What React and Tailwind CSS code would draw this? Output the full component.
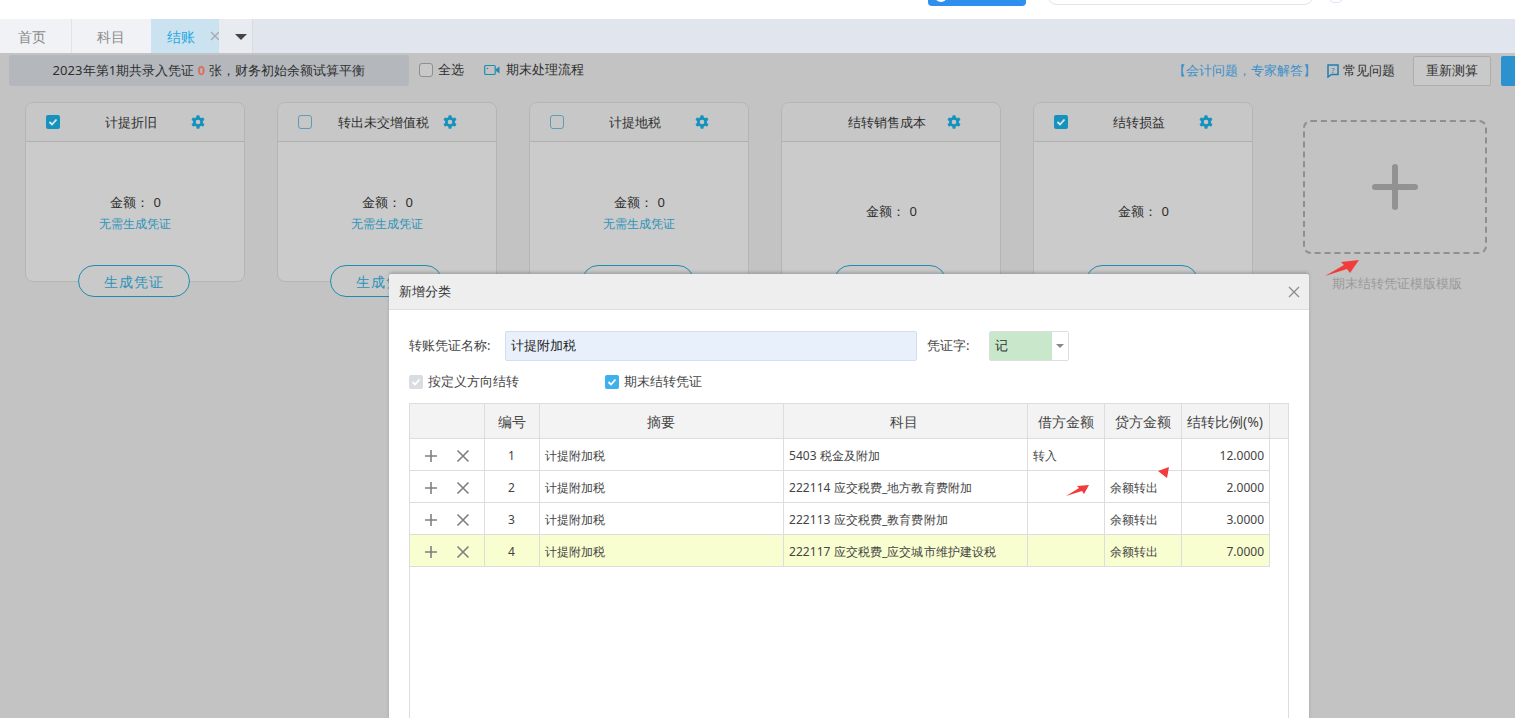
const SANS = "font-['Liberation_Sans','Noto_Sans_CJK_SC',sans-serif]";

function Gear() {
  return (
    <svg width="14" height="14" viewBox="0 0 14 14" className="shrink-0">
      <g fill="#1592bd">
        <circle cx="7" cy="7" r="5" />
        <rect x="5.4" y="0.3" width="3.2" height="13.4" rx="0.6" />
        <rect x="5.4" y="0.3" width="3.2" height="13.4" rx="0.6" transform="rotate(60 7 7)" />
        <rect x="5.4" y="0.3" width="3.2" height="13.4" rx="0.6" transform="rotate(120 7 7)" />
      </g>
      <circle cx="7" cy="7" r="2.3" fill="#c6c6c6" />
    </svg>
  );
}

function CardCheck({ state }) {
  if (state === "none") return <span className="w-[14px] h-[14px] shrink-0" />;
  if (state === "on")
    return (
      <span className="w-[14px] h-[14px] shrink-0 rounded-[2px] bg-[#1592bd] flex items-center justify-center">
        <svg width="10" height="10" viewBox="0 0 10 10"><path d="M1.5 5 L4 7.5 L8.5 2.5" stroke="#dfe9ee" strokeWidth="1.8" fill="none" /></svg>
      </span>
    );
  return <span className="w-[14px] h-[14px] shrink-0 rounded-[3px] border border-[#5b9db5]" />;
}

function Card({ title, check, hint }) {
  return (
    <div className="relative w-[220px] h-[180px] shrink-0">
      <div className="h-full rounded-[8px] border border-[#b5b5b5] bg-[#cbcbcb] flex flex-col">
        <div className="h-[39px] shrink-0 border-b border-[#b0b0b0] bg-[#c7c7c7] rounded-t-[8px] flex items-center pl-[20px]">
          <CardCheck state={check} />
          <span className="ml-[6px] w-[130px] pt-[1px] text-center text-[13px] text-[#2e2e2e]">{title}</span>
          <span className="ml-[-5px]"><Gear /></span>
        </div>
        <div className={`flex-1 flex flex-col items-center justify-center pb-[1px] text-[13px] text-[#2e2e2e] ${hint ? "pt-[6px]" : ""}`}>
          <span className="leading-[20px] tracking-[0.3px] pl-[1px]">金额： 0</span>
          {hint && <span className="leading-[24px] text-[12px] text-[#2b93ba]">无需生成凭证</span>}
        </div>
      </div>
      <div className="absolute left-[53px] top-[163px] w-[112px] h-[32px] rounded-full border border-[#1f8db0] bg-[#c9c9c9] flex items-center justify-center text-[14px] tracking-[1px] text-[#2b93ba]">
        生成凭证
      </div>
    </div>
  );
}

function Plus() {
  return (
    <svg width="14" height="14" viewBox="0 0 14 14"><path d="M7 1 V13 M1 7 H13" stroke="#7f7f7f" strokeWidth="1.6" /></svg>
  );
}
function Cross() {
  return (
    <svg width="14" height="14" viewBox="0 0 14 14"><path d="M1.5 1.5 L12.5 12.5 M12.5 1.5 L1.5 12.5" stroke="#7f7f7f" strokeWidth="1.6" /></svg>
  );
}

function RedArrow({ className, w, h, d }) {
  return (
    <svg className={className} width={w} height={h} viewBox={`0 0 ${w} ${h}`}><path d={d} fill="#f23c3c" /></svg>
  );
}

const COLS = "grid grid-cols-[75px_55px_244px_244px_77px_77px_88px_19px]";
const rows = [
  ["1", "5403 税金及附加", "转入", "", "12.0000"],
  ["2", "222114 应交税费_地方教育费附加", "", "余额转出", "2.0000"],
  ["3", "222113 应交税费_教育费附加", "", "余额转出", "3.0000"],
  ["4", "222117 应交税费_应交城市维护建设税", "", "余额转出", "7.0000"],
];
const heads = ["", "编号", "摘要", "科目", "借方金额", "贷方金额", "结转比例(%)", ""];

export default function App() {
  return (
    <div className={`${SANS} relative w-[1515px] h-[718px] overflow-hidden bg-[#c3c3c3]`}>
      {/* top white strip */}
      <div className="h-[19px] bg-white relative flex items-start">
        <div className="absolute left-[928px] top-[-4px] w-[98px] h-[10px] rounded-b-[4px] bg-[#2f8fee]">
          <span className="absolute left-[7px] top-[-6px] w-[12px] h-[12px] rounded-full bg-white" />
        </div>
        <div className="absolute left-[1047px] top-[-10px] w-[267px] h-[15px] rounded-b-[10px] border border-[#e3e3e3] bg-white" />
        <div className="absolute left-[1329px] top-[-8px] w-[14px] h-[11px] rounded-full border border-[#d8e4f2]" />
      </div>

      {/* tabs */}
      <div className="h-[34px] bg-[#e1e6ee] flex text-[14px]">
        <div className="w-[72px] bg-[#f0f2f5] border-r border-[#e1e4e9] text-[#8a8a8a] flex items-center pl-[18px]">首页</div>
        <div className="w-[79px] bg-[#f0f2f5] text-[#8a8a8a] flex items-center justify-center pr-[2px]">科目</div>
        <div className="w-[68px] bg-[#cbe2f0] text-[#29a9df] flex items-center pl-[16px] gap-[15px]">
          <span className="whitespace-nowrap shrink-0">结账</span>
          <svg className="shrink-0" width="10" height="10" viewBox="0 0 10 10"><path d="M1 1 L9 9 M9 1 L1 9" stroke="#a2abb2" strokeWidth="1.3" /></svg>
        </div>
        <div className="w-[34px] bg-[#e8ecf1] border-r border-[#d9dde3] flex items-center justify-center pl-[10px]">
          <span className="w-0 h-0 mt-[1px] border-x-[6px] border-x-transparent border-t-[6px] border-t-[#444]" />
        </div>
      </div>

      {/* toolbar */}
      <div className="h-[33px] flex items-center text-[13px] text-[#2e2e2e]">
        <div className="ml-[9px] w-[400px] h-[31px] mt-[2px] rounded-[3px] bg-[#b4b8bd] flex items-center justify-center">
          <span className="tracking-[0.05px]">2023年第1期共录入凭证 <b className="text-[#d9705f]">0</b> 张，财务初始余额试算平衡</span>
        </div>
        <span className="ml-[10px] w-[14px] h-[14px] rounded-[3px] border border-[#8f8f8f] bg-[#c9c9c9]" />
        <span className="ml-[5px]">全选</span>
        <svg className="ml-[20px]" width="16" height="12" viewBox="0 0 16 12">
          <rect x="0.7" y="1.5" width="10.5" height="9" rx="1" fill="none" stroke="#1f8db0" strokeWidth="1.2" />
          <path d="M12 5 L15.5 2.5 V9.5 L12 7 Z" fill="#1f8db0" />
          <circle cx="3.5" cy="4.5" r="0.8" fill="#1f8db0" />
        </svg>
        <span className="ml-[6px]">期末处理流程</span>
        <span className="ml-auto pt-[2px] text-[#3a8fc9]">【会计问题，专家解答】</span>
        <svg className="ml-[11px] mt-[2px]" width="12" height="14" viewBox="0 0 12 14">
          <path d="M1 1 H11 V10.5 H4.5 L1 13 Z" fill="none" stroke="#1f7fb0" strokeWidth="1.5" />
          <text x="6" y="8.5" fontSize="7.5" textAnchor="middle" fill="#1f7fb0">?</text>
        </svg>
        <span className="ml-[4px] pt-[2px]">常见问题</span>
        <div className="ml-[18px] mt-[2px] w-[78px] h-[30px] rounded-[2px] border border-[#adadad] bg-[#c9c9c9] flex items-center justify-center">重新测算</div>
        <div className="ml-[10px] mt-[2px] w-[14px] h-[30px] rounded-l-[2px] bg-[#2b92cf]" />
      </div>

      {/* cards */}
      <div className="flex gap-[32px] pl-[25px] pt-[16px] relative">
        <Card title="计提折旧" check="on" hint />
        <Card title="转出未交增值税" check="off" hint />
        <Card title="计提地税" check="off" hint />
        <Card title="结转销售成本" check="none" />
        <Card title="结转损益" check="on" />
        <div className="ml-[18px] mt-[18px] flex flex-col items-center">
          <div className="w-[184px] h-[134px] rounded-[8px] border-[2px] border-dashed border-[#8f8f8f] flex items-center justify-center">
            <svg width="46" height="46" viewBox="0 0 46 46"><path d="M23 3 V43 M3 23 H43" stroke="#929292" strokeWidth="6" strokeLinecap="round" /></svg>
          </div>
          <span className="mt-[20px] pl-[3px] text-[13px] text-[#9a9a9a]">期末结转凭证模版模版</span>
        </div>
      </div>

      <RedArrow className="absolute left-[1325px] top-[259px]" w={34} h={18} d="M0 17 L19 6 L16 3 L34 1 L25 14 L22 10 Z" />

      {/* modal */}
      <div className="absolute left-[389px] top-[274px] w-[920px] h-[460px] rounded-t-[3px] bg-white shadow-[0_-2px_3px_rgba(90,100,110,0.35)] text-[#333]">
        <div className="h-[36px] bg-[#eeeeee] border-b border-[#dfdfdf] rounded-t-[3px] flex items-center pl-[10px] pr-[9px] justify-between text-[13px]">
          <span>新增分类</span>
          <svg width="12" height="12" viewBox="0 0 12 12"><path d="M1 1 L11 11 M11 1 L1 11" stroke="#8c8c8c" strokeWidth="1.3" /></svg>
        </div>
        <div className="pl-[20px] pr-[20px]">
          <div className="mt-[21px] flex items-center text-[13px]">
            <span className="w-[96px] text-[#444]">转账凭证名称:</span>
            <div className="w-[412px] h-[30px] rounded-[2px] border border-[#d3dfee] bg-[#e8f0fc] flex items-center pl-[5px] text-[13px] text-[#222]">计提附加税</div>
            <span className="ml-[10px] w-[62px] text-[#444]">凭证字:</span>
            <div className="w-[80px] h-[30px] rounded-[2px] border border-[#dddddd] flex overflow-hidden">
              <span className="w-[62px] bg-[#c9e7cb] flex items-center pl-[5px] text-[#333]">记</span>
              <span className="flex-1 flex items-center justify-center bg-white">
                <span className="w-0 h-0 border-x-[4px] border-x-transparent border-t-[4px] border-t-[#888]" />
              </span>
            </div>
          </div>
          <div className="mt-[13px] h-[16px] flex items-center text-[13px] text-[#444]">
            <span className="w-[14px] h-[14px] rounded-[2px] bg-[#d9dde2] flex items-center justify-center">
              <svg width="10" height="10" viewBox="0 0 10 10"><path d="M1.5 5 L4 7.5 L8.5 2.5" stroke="#ffffff" strokeWidth="1.8" fill="none" /></svg>
            </span>
            <span className="ml-[5px] w-[177px]">按定义方向结转</span>
            <span className="w-[14px] h-[14px] rounded-[2px] bg-[#3eb0ee] flex items-center justify-center">
              <svg width="10" height="10" viewBox="0 0 10 10"><path d="M1.5 5 L4 7.5 L8.5 2.5" stroke="#ffffff" strokeWidth="1.8" fill="none" /></svg>
            </span>
            <span className="ml-[5px]">期末结转凭证</span>
          </div>

          {/* table */}
          <div className="mt-[13px] w-[880px] h-[400px] border border-[#dddddd] text-[#444]">
            <div className={`${COLS} h-[35px] bg-[#f3f3f3] border-b border-[#dddddd] text-[14px]`}>
              {heads.map((h, i) => (
                <div key={i} className={`flex items-center justify-center whitespace-nowrap ${i < 7 ? "border-r border-[#dddddd]" : ""} ${h === "科目" ? "pr-[3px]" : "pr-[1px]"}`}>{h}</div>
              ))}
            </div>
            {rows.map((r) => {
              const bg = r[0] === "4" ? "bg-[#f9fed0]" : "bg-white";
              const cell = `flex items-center border-r border-b border-[#dddddd] ${bg} whitespace-nowrap pt-[2px]`;
              return (
                <div key={r[0]} className={`${COLS} h-[32px] text-[12px]`}>
                  <div className={`${cell} pl-[14px] gap-[18px]`}><Plus /><Cross /></div>
                  <div className={`${cell} justify-center pr-[1px]`}>{r[0]}</div>
                  <div className={`${cell} pl-[5px]`}>计提附加税</div>
                  <div className={`${cell} pl-[5px] tracking-[0.06px]`}>{r[1]}</div>
                  <div className={`${cell} pl-[5px]`}>{r[2]}</div>
                  <div className={`${cell} pl-[5px]`}>{r[3]}</div>
                  <div className={`${cell} justify-end pr-[5px]`}>{r[4]}</div>
                  <div />
                </div>
              );
            })}
          </div>
        </div>
      </div>

      <RedArrow className="absolute left-[1066px] top-[484px]" w={24} h={13} d="M0 12 L13 4 L11 2 L23 1 L18 10 L16 7 Z" />
      <RedArrow className="absolute left-[1158px] top-[467px]" w={11} h={12} d="M0 4 L11 0 L9 11 Z" />
    </div>
  );
}
